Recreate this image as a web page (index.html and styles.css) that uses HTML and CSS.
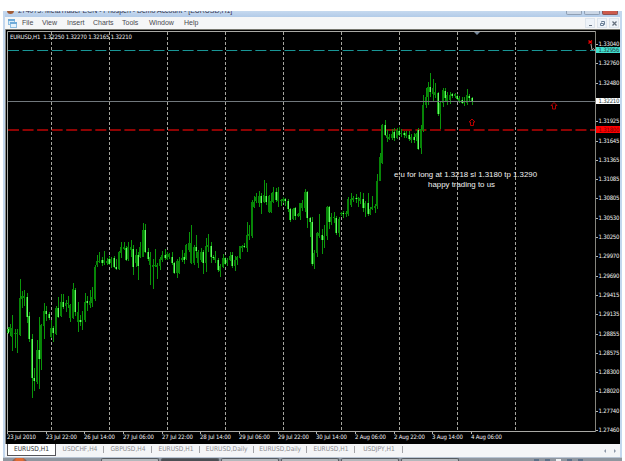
FILE: index.html
```html
<!DOCTYPE html>
<html lang="en">

<head>
  <meta charset="UTF-8">
  <meta name="viewport" content="width=device-width, initial-scale=1.0">
  <title>MetaTrader</title>
  <link rel="stylesheet" href="styles.css">
</head>

<body>
  <div class="window">
    <div class="titlebar">
      <span class="app-icon"></span>
      <span class="title">274073: MetaTrader ECN - Phospen - Demo Account - [EURUSD,H1]</span>
      <span class="win-btn"></span>
      <span class="win-btn"></span>
      <span class="win-btn close"></span>
    </div>

    <div class="menubar">
      <svg class="menu-icon" width="9" height="10" viewBox="0 0 9 10">
        <rect x="0.5" y="1.5" width="6" height="5" fill="#d9edfa" stroke="#8fbfe2" />
        <rect x="0" y="1" width="7" height="2" fill="#6fabd9" />
        <rect x="2.5" y="4.5" width="6" height="5" fill="#e3f2fc" stroke="#8fbfe2" />
        <rect x="2" y="4" width="7" height="2" fill="#6fabd9" />
      </svg>
      <ul class="menu">
        <li>File</li>
        <li>View</li>
        <li>Insert</li>
        <li>Charts</li>
        <li>Tools</li>
        <li>Window</li>
        <li>Help</li>
      </ul>
      <div class="mdi">
        <span><svg width="9" height="9" viewBox="0 0 9 9"><path d="M3 6.5h3" stroke="#6b7684" /></svg></span>
        <span><svg width="9" height="9" viewBox="0 0 9 9"><path d="M3.5 3.5v-1h3v3h-1M2.5 4.5h3v2h-3z" fill="none" stroke="#6b7f96" /></svg></span>
        <span><svg width="9" height="9" viewBox="0 0 9 9"><path d="M2.5 2.5l4 4M6.5 2.5l-4 4" stroke="#66717e" stroke-width="1.3" /></svg></span>
      </div>
    </div>

    <svg class="chart" id="chart" width="615" height="415" viewBox="5 29 615 415">
      <rect x="5" y="29" width="615" height="1" fill="#77776f" />
      <path d="M5.5 29v415" stroke="#8c8c88" />
      <g id="grid"></g>
      <path class="frame" d="M7.5 431.5V31.5H595" />
      <path class="frame" d="M7 431.5H596" />
      <path class="frame side" d="M595.5 31V432" />
      <path class="tp" d="M8 50.5H595" />
      <path class="sl" d="M8 130H595" />
      <g id="candles" shape-rendering="crispEdges"></g>
      <path d="M8 101.5H595" stroke="#71787c" />
      <path d="M474 32h6l-3 3z" fill="#75879b" />
      <path class="arrow" d="M472 119l3 3h-1.5v3.5h-3V122H469z" />
      <path class="arrow" d="M554 102.5l3 3h-1.5v3.500h-3v-3.500H551z" />
      <path d="M588.5 40.5l3.5 3M592 40.5l-3.500 3" stroke="#f00000" stroke-width="1.4" />
      <path d="M591 44l1 6 1.5-1.5 2 2.5" fill="none" stroke="#b4aaa5" />
      <text class="note" x="394" y="177" textLength="143" lengthAdjust="spacingAndGlyphs">e:u for long at 1.3218 sl 1.3180 tp 1.3290</text>
      <text class="note" x="428" y="186.500" textLength="67" lengthAdjust="spacingAndGlyphs">happy trading to us</text>
      <text class="small" x="10" y="39" textLength="122" xml:space="preserve">EURUSD,H1  1.32250 1.32270 1.32165 1.32210</text>
      <g id="axis"></g>
      <rect x="596" y="47" width="24" height="6" fill="#40e0d0" />
      <text class="price dark" x="598.5" y="52.3" textLength="21">1.32956</text>
      <rect x="596" y="98" width="24" height="6" fill="#fff" />
      <text class="price dark" x="598.5" y="103.3" textLength="21">1.32210</text>
      <rect x="596" y="126" width="24" height="7" fill="#f00" />
      <text class="price stop" x="598.5" y="131.8" textLength="21">1.31800</text>
    </svg>

    <div class="tabbar">
      <ul class="tabs">
        <li class="active">EURUSD,H1</li>
        <li>USDCHF,H4</li>
        <li>GBPUSD,H4</li>
        <li>EURUSD,H1</li>
        <li class="wide">EURUSD,Daily</li>
        <li class="wide">EURUSD,Daily</li>
        <li>EURUSD,H1</li>
        <li>USDJPY,H1</li>
      </ul>
      <svg class="scroll" width="14" height="6" viewBox="0 0 14 6">
        <path d="M3 1L1 3l2 2zM11 1l2 2-2 2z" fill="#8e98a8" />
      </svg>
    </div>
  </div>

  <div class="taskbar">
    <span class="start"></span>
    <div class="tasks">
      <span></span>
      <span class="on"></span>
      <span></span>
      <span></span>
      <span></span>
      <span></span>
    </div>
    <div class="tray"><i></i><i></i><i class="lit"></i><i></i><i></i></div>
  </div>

  <script src="chart.js"></script>
</body>

</html>
```

FILE: styles.css
```css
* {
  margin: 0;
  padding: 0;
  box-sizing: border-box;
}

body {
  width: 625px;
  height: 461px;
  padding-top: 11px;
  overflow: hidden;
  background: #fff;
  font-family: "Liberation Sans", Arial, sans-serif;
}

ul {
  list-style: none;
}

.window {
  width: 619px;
  height: 446px;
  margin-left: 3px;
  padding: 0 2px;
  background: #c3d7ee;
}

.titlebar {
  display: flex;
  height: 6px;
  overflow: hidden;
  background: linear-gradient(#c6d9ef, #b2cbe8);
}

.app-icon {
  width: 7px;
  height: 7px;
  margin: -4px 4px 0 2px;
  border-radius: 50%;
  background: #a05a35;
}

.title {
  flex: 1;
  margin-top: -4px;
  font-size: 7px;
  letter-spacing: -0.03px;
  line-height: 8px;
  white-space: nowrap;
  color: #35354c;
}

.win-btn {
  width: 16px;
  height: 4px;
  margin-right: 2px;
  border: 1px solid #8fa0b5;
  border-top: none;
  border-radius: 0 0 2px 2px;
  background: #cbd7e6;
}

.win-btn.close {
  background: #cc5a4c;
  border-color: #8c5050;
}

.menubar {
  display: flex;
  align-items: center;
  height: 12px;
  background: #f5f6f7;
}

.menu-icon {
  margin: 0 5px 0 3px;
}

.menu {
  display: flex;
  flex: 1;
  font-size: 7px;
  line-height: 12px;
  color: #4a4a50;
}

.menu li {
  width: 26px;
}

.menu li:first-child {
  width: 20px;
}

.menu li:nth-child(2) {
  width: 25px;
}

.menu li:nth-child(5) {
  width: 27px;
}

.menu li:nth-child(4) {
  width: 29px;
}

.menu li:nth-child(6) {
  width: 35px;
}

.mdi {
  display: flex;
  gap: 2px;
  padding-right: 1px;
}

.mdi span {
  width: 10px;
  height: 10px;
  border: 1px solid #dde4ec;
  background: #eef3f9;
}

.mdi svg {
  display: block;
}

.chart {
  display: block;
  background: #000;
}

.frame {
  fill: none;
  stroke: #a9a9a5;
}

.frame.side {
  stroke: #85857d;
}

.period {
  stroke: #a5a59e;
  stroke-dasharray: 3 2;
}

.tick {
  stroke: #b5b5b0;
}

.tp {
  stroke: #199696;
  stroke-dasharray: 11 3.55;
}

.sl {
  stroke: #bd0505;
  stroke-width: 1.5;
  stroke-dasharray: 11 3.55;
}

.arrow {
  fill: none;
  stroke: #b80000;
}

.wick {
  fill: #0a950a;
}

.up {
  fill: #078507;
}

.down {
  fill: #0fa80f;
}

.core {
  fill: #6cf36c;
}

.small,
.price {
  fill: #f2f2f2;
  font-family: "DejaVu Sans Condensed", "DejaVu Sans", sans-serif;
  font-size: 6px;
}

.price.dark {
  fill: #26403e;
}

.price.stop {
  fill: #780000;
}

.note {
  fill: #f0f0f0;
  font-size: 7.9px;
}

.tabbar {
  display: flex;
  justify-content: space-between;
  align-items: center;
  height: 13px;
  padding: 0 3px 0 2px;
  background: #f4f5f7;
}

.tabs {
  display: flex;
  height: 13px;
  font-family: "DejaVu Sans Condensed", "DejaVu Sans", sans-serif;
  font-size: 6.6px;
  line-height: 9px;
  color: #8c8c90;
}

.tabs li {
  position: relative;
  width: 48px;
  padding-top: 1px;
  text-align: center;
}

.tabs li.wide {
  width: 53.5px;
}

.tabs li + li::after {
  content: "";
  position: absolute;
  top: 2px;
  right: 0;
  width: 1px;
  height: 7px;
  background: #a4a4a8;
}

.tabs .active {
  width: 49px;
  height: 12px;
  border: 1px solid #55555a;
  border-top: none;
  background: #fff;
  color: #333;
}

.taskbar {
  display: flex;
  height: 4px;
  margin: 0 3px;
  overflow: hidden;
  background: #8f969f;
  border-top: 1px solid #b8c4d3;
}

.start {
  width: 17px;
  height: 17px;
  margin: -1px 10px 0 8px;
  border-radius: 50%;
  background: radial-gradient(circle at 50% 20%, #e06b30 20%, #30557d 55%);
}

.tasks {
  display: flex;
  gap: 2px;
  margin-left: 63px;
}

.tasks span {
  width: 58px;
  border: 1px solid #565b61;
  border-bottom: none;
  border-radius: 2px 2px 0 0;
  background: #b4b8bc;
}

.tasks .on {
  background: #4c4f54;
}

.tray {
  display: flex;
  gap: 6px;
  margin-left: 75px;
}

.tray i {
  width: 5px;
  margin-top: 1px;
  background: #5c7088;
}

.tray .lit {
  background: #eef0f2;
}
```

FILE: chart.js
```js
const NS = 'http://www.w3.org/2000/svg'

// 创建SVG元素
function add(parent, name, attrs, text) {
  const el = document.createElementNS(NS, name)
  for (const key in attrs) {
    el.setAttribute(key, attrs[key])
  }
  if (text) el.textContent = text
  document.getElementById(parent).appendChild(el)
}

// high, body top, body bottom, low (thirds of a pixel below base), 1 = down bar
const segments = [
  { base: 270, bars: [
    [170,178,190,192,1],[163,172,185,197,0],[135,175,200,243,0],[177,188,192,235,0],[178,188,192,248,0],
    [27,85,195,198,0],[62,78,88,115,0],[60,78,85,108,0],[70,82,142,160,1],[125,138,207,217,1],
    [193,207,325,383,1],[295,323,333,362,1],[210,240,335,342,0],[140,240,267,357,1],[162,165,267,300,0],
    [98,122,168,208,0],[108,122,132,152,1],[127,132,145,150,1],[150,175,200,205,0],[168,175,190,215,1],
    [108,115,192,195,0],[80,115,142,145,1],[72,97,138,142,0],[72,97,110,117,1],[90,100,108,125,0],
    [78,98,103,115,0],[103,105,143,155,0],[40,58,143,147,0],[55,60,125,137,1],[95,125,155,187,0],
    [135,150,155,168,1],[122,150,155,180,0],[70,95,150,155,0],[78,92,100,122,1],[60,92,105,115,0],
    [52,82,100,112,0],[-15,-8,87,93,0]
  ] },
  { base: 220, bars: [
    [105,122,135,140,0],[97,123,126,130,0],[110,120,128,137,1],[92,120,130,135,0],[115,122,128,135,0],
    [107,117,132,135,1],[110,118,130,145,0],[108,115,140,145,1],[118,140,147,150,1],[92,95,147,150,0],
    [67,82,100,115,0],[65,80,87,90,0],[78,85,120,123,1],[65,82,118,122,0],[60,82,90,110,0],
    [75,88,140,165,1],[88,105,130,140,0],[95,105,137,180,1],[67,80,110,115,0],[10,30,110,112,0],
    [12,30,95,100,1],[85,95,118,123,1],[95,112,135,195,0],[117,135,140,207,0],[87,135,138,140,0],
    [130,135,140,177,0],[112,118,138,150,0],[92,105,120,127,0],[88,105,115,120,1],[95,103,118,120,0],
    [98,102,112,117,0],[95,110,128,135,1],[125,130,158,162,1]
  ] },
  { base: 200, bars: [
    [178,182,220,235,0],[172,182,220,222,0],[150,175,180,185,0],[158,172,180,192,1],[132,135,178,180,0],
    [95,130,150,155,0],[75,130,190,192,0],[135,140,190,195,0],[105,140,152,175,1],[150,155,188,205,0],
    [145,155,180,185,0],[150,155,190,222,1],[115,138,190,215,0],[102,135,140,155,0],[127,138,172,190,1],
    [165,170,173,180,1],[152,172,180,190,0],[175,180,210,215,1],[192,198,212,230,0],[162,175,200,205,0],
    [172,175,192,195,1],[175,180,190,197,0],[157,167,180,182,0],[155,165,198,205,1],[168,180,198,213,0],
    [167,172,180,195,0],[137,138,173,178,0],[135,138,145,157,0],[130,138,142,145,1],[65,105,143,155,0],
    [75,103,108,120,0],[0,5,108,113,0]
  ] },
  { base: 160, bars: [
    [107,125,140,145,0],[100,110,122,128,0],[92,108,130,140,0],[100,108,128,162,1],[60,105,125,130,0],
    [68,108,125,135,1],[105,108,155,160,0],[100,122,155,160,0],[82,95,125,130,0],[85,95,120,125,1],
    [82,95,122,142,0],[118,120,124,138,0],[110,118,122,130,0],[115,118,122,137,1],[118,122,148,155,1],
    [145,148,180,187,1],[143,147,178,180,0],[140,145,167,180,1],[158,163,168,172,0],[128,130,167,180,0],
    [120,130,145,152,0],[88,95,145,155,0],[92,95,175,203,1],[172,175,185,230,1],[172,185,312,318,1],
    [270,278,312,327,0],[215,218,280,290,0],[162,218,228,235,0],[207,225,240,282,1],[195,228,240,265,0],
    [138,142,228,240,0],[137,142,185,208,1],[160,172,187,195,0],[155,170,175,190,0],[167,175,220,225,1],
    [172,178,220,230,0],[155,160,163,167,0],[153,158,163,175,1],[153,160,163,172,0],[112,118,162,168,0],
    [100,118,135,142,0],[107,115,120,125,0],[103,113,118,130,1],[110,113,118,140,0],[97,115,122,132,0],
    [100,118,143,155,1],[123,130,143,170,0],[100,130,163,167,1],[140,147,163,165,0],[108,140,147,150,0],
    [133,138,143,158,0],[42,62,138,147,0],[-22,-10,62,63,0]
  ] },
  { base: 60, bars: [
    [192,195,310,312,0],[180,195,225,228,1],[210,225,235,247,0],[222,230,236,240,0],[208,222,235,240,0],
    [205,215,235,242,1],[205,210,235,238,0],[200,212,225,228,1],[208,218,222,230,0],[212,218,225,235,1],
    [213,220,228,235,0],[213,225,238,243,1],[222,232,240,250,0],[220,230,240,250,1],[218,222,230,242,0],
    [205,210,268,270,1],[195,208,265,282,0],[105,135,210,215,0],[85,112,135,143,0],[65,82,110,135,0],
    [40,80,95,110,1],[58,85,102,125,0],[68,95,105,115,0],[95,100,163,168,1],[125,130,162,207,0],
    [83,90,130,140,0],[85,92,115,122,1],[95,105,125,135,0],[97,105,120,132,0],[98,103,108,115,1],
    [98,103,108,115,0],[103,108,116,120,1],[108,115,122,128,0],[112,120,128,132,1],[112,122,130,138,0],
    [87,105,130,135,0],[103,107,115,122,1],[112,115,125,135,1]
  ] }
]

let i = 0
segments.forEach(function (seg) {
  seg.bars.forEach(function (bar) {
    const y = bar.slice(0, 4).map(v => Math.round(seg.base + v / 3))
    const x = Math.floor(8 + i * 58 / 24)
    const height = Math.max(1, y[2] - y[1])
    add('candles', 'rect', { class: 'wick', x: x, y: y[0], width: 1, height: y[3] - y[0] })
    add('candles', 'rect', { class: bar[4] ? 'down' : 'up', x: x - 1, y: y[1], width: 2, height: height })
    if (bar[4]) add('candles', 'rect', { class: 'core', x: x, y: y[1], width: 1, height: height })
    i++
  })
})

// 日期分隔线
for (let x = 51.5; x < 520; x += 58) {
  add('grid', 'path', { class: 'period', d: 'M' + x + ' 32V431' })
}

const prices = ['1.33040', '1.32760', '1.32480', '', '1.31925', '1.31645', '1.31365', '1.31085', '1.30805', '1.30530', '1.30250',
  '1.29970', '1.29690', '1.29415', '1.29135', '1.28855', '1.28575', '1.28300', '1.28020', '1.27740', '1.27460']
prices.forEach(function (price, n) {
  const y = Math.round(44 + n * 19.3)
  add('axis', 'path', { class: 'tick', d: 'M596 ' + (y + 0.5) + 'h2' })
  if (price) add('axis', 'text', { class: 'price', x: 598.5, y: y + 2.3, textLength: 21 }, price)
})

const dates = ['23 Jul 2010', '23 Jul 22:00', '26 Jul 14:00', '27 Jul 06:00', '27 Jul 22:00', '28 Jul 14:00', '29 Jul 06:00',
  '29 Jul 22:00', '30 Jul 14:00', '2 Aug 06:00', '2 Aug 22:00', '3 Aug 14:00', '4 Aug 06:00']
dates.forEach(function (date, n) {
  const x = Math.round(7 + n * 38.67)
  add('axis', 'path', { class: 'tick', d: 'M' + (x + 0.5) + ' 432v2' })
  add('axis', 'text', { class: 'small', x: x, y: 439.3, textLength: n === 0 ? 29 : 31 }, date)
})
```
